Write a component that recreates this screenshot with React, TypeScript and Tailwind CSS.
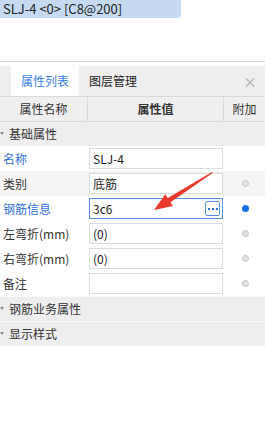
import type { ReactNode } from "react";

type Row = { label: string; value: string; blue?: boolean; dot?: "gray" | "blue" | null; active?: boolean; shaded?: boolean };

const rows: Row[] = [
  { label: "名称", value: "SLJ-4", blue: true, dot: null },
  { label: "类别", value: "底筋", dot: "gray", shaded: true },
  { label: "钢筋信息", value: "3c6", blue: true, dot: "blue", active: true },
  { label: "左弯折(mm)", value: "(0)", dot: "gray" },
  { label: "右弯折(mm)", value: "(0)", dot: "gray" },
  { label: "备注", value: "", dot: "gray" },
];

const font = { fontFamily: '"Noto Sans CJK SC", "Liberation Sans", sans-serif' };

function GroupRow({ children, first }: { children: ReactNode; first?: boolean }) {
  return (
    <div className={`relative flex h-[25px] items-center bg-[#eeeeee] pl-[9px] text-[12px] text-[#333] ${first ? "border-t border-[#d9d9d9]" : "border-t border-[#fafafa]"}`}>
      <span className="absolute left-0 top-[10px] h-0 w-0 border-x-[2px] border-t-[3px] border-x-transparent border-t-[#888]" />
      {children}
    </div>
  );
}

function PropRow({ r }: { r: Row }) {
  return (
    <div className={`flex h-[25px] items-center ${r.shaded ? "bg-[#f5f5f5]" : "bg-white"}`}>
      <div className={`w-[89px] shrink-0 pl-[3px] text-[12px] ${r.blue ? "text-[#2f6fdc]" : "text-[#333]"}`}>{r.label}</div>
      <div
        className={`flex h-[21px] w-[134px] shrink-0 items-center border bg-white pl-[3px] pr-[2px] text-[12px] text-[#222] ${r.active ? "border-[#5b8fe0]" : "border-[#dcdcdc]"}`}
      >
        <span className="flex-1">{r.value}</span>
        {r.active && (
          <span className="flex h-[15px] w-[15px] items-center justify-center gap-[2px] rounded-[2px] border border-[#5b8fe0] bg-white">
            <span className="h-[2px] w-[2px] bg-[#2f6fdc]" />
            <span className="h-[2px] w-[2px] bg-[#2f6fdc]" />
            <span className="h-[2px] w-[2px] bg-[#2f6fdc]" />
          </span>
        )}
      </div>
      <div className="flex flex-1 justify-center pl-[2px]">
        {r.dot === "gray" && <span className="h-[7px] w-[7px] rounded-full border border-[#c4c4c4] bg-[#e2e2e2]" />}
        {r.dot === "blue" && <span className="h-[7px] w-[7px] rounded-full bg-[#1b6fe4]" />}
      </div>
    </div>
  );
}

export default function App() {
  return (
    <div className="relative h-[433px] w-[265px] overflow-hidden bg-white" style={font}>
      <div className="h-[18px] w-[181px] rounded-br-[4px] bg-[#c5daf1] pl-[3px] text-[13px] leading-[18px] text-[#222]">
        SLJ-4 &lt;0&gt; [C8@200]
      </div>

      <div className="mt-[43px] border-t border-[#d6d6d6]" />
      <div className="mt-[4px] flex h-[30px] items-stretch bg-[#eeeeee] text-[12px]">
        <div className="ml-[11px] flex w-[68px] items-center justify-center bg-white text-[#3a7de6]">属性列表</div>
        <div className="ml-[10px] flex items-center text-[#222]">图层管理</div>
        <div className="ml-auto flex items-center pr-[8px] text-[14px] text-[#aaa]">×</div>
      </div>

      <div className="flex h-[25px] border-t border-[#d9d9d9] bg-[#efefef] text-[12px] text-[#333]">
        <div className="flex w-[88px] items-center justify-center border-r border-[#d9d9d9]">属性名称</div>
        <div className="flex w-[136px] items-center justify-center border-r border-[#d9d9d9] font-bold">属性值</div>
        <div className="flex flex-1 items-center justify-center">附加</div>
      </div>

      <GroupRow first>基础属性</GroupRow>
      {rows.map((r) => (
        <PropRow key={r.label} r={r} />
      ))}
      <GroupRow>钢筋业务属性</GroupRow>
      <GroupRow>显示样式</GroupRow>

      <svg className="absolute left-0 top-0" width="265" height="433" viewBox="0 0 265 433">
        <polygon
          points="212,172 212.6,173 170.5,202.2 172.9,206 154,210 165.3,194.2 167.8,197.9"
          fill="#ea3a2d"
        />
      </svg>
    </div>
  );
}
